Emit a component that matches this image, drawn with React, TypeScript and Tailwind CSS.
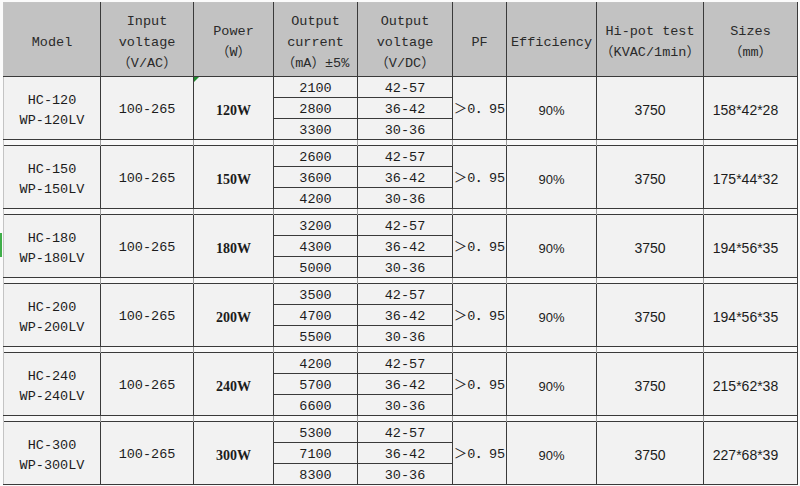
const groups = [
  { model: "HC-120", alt: "WP-120LV", power: "120W", currents: ["2100", "2800", "3300"], size: "158*42*28" },
  { model: "HC-150", alt: "WP-150LV", power: "150W", currents: ["2600", "3600", "4200"], size: "175*44*32" },
  { model: "HC-180", alt: "WP-180LV", power: "180W", currents: ["3200", "4300", "5000"], size: "194*56*35" },
  { model: "HC-200", alt: "WP-200LV", power: "200W", currents: ["3500", "4700", "5500"], size: "194*56*35" },
  { model: "HC-240", alt: "WP-240LV", power: "240W", currents: ["4200", "5700", "6600"], size: "215*62*38" },
  { model: "HC-300", alt: "WP-300LV", power: "300W", currents: ["5300", "7100", "8300"], size: "227*68*39" },
];

const volts = ["42-57", "36-42", "30-36"];

const mono = "font-['Liberation_Mono','Noto_Sans_CJK_SC',monospace]";
const sans = "font-['Liberation_Sans',Arial,sans-serif]";
const cell = "border border-[#3a3a3a] p-0 text-center align-middle";
// merged cells sit a little low in the sheet
const tall = `${cell} pt-[5px]`;

function Group({ g, first }: { g: (typeof groups)[number]; first: boolean }) {
  return (
    <>
      {g.currents.map((c, i) => (
        <tr key={c} className="h-[21px]">
          {i === 0 && (
            <>
              <td rowSpan={3} className={`${tall} ${mono} border-l-[#c4c4c4] text-[13.5px] leading-[20px]`}>
                {g.model}
                <br />
                {g.alt}
              </td>
              <td rowSpan={3} className={`${tall} ${mono} text-[13.5px]`}>
                100-265
              </td>
              <td rowSpan={3} className={`${tall} relative font-['Liberation_Serif',serif] text-[14px] font-bold`}>
                {first && (
                  <span className="absolute left-0 top-0 h-0 w-0 border-r-[5px] border-t-[5px] border-r-transparent border-t-[#1e8a2e]" />
                )}
                {g.power}
              </td>
            </>
          )}
          <td className={`${cell} ${mono} pt-[3px] text-[13.5px] leading-[17px]`}>{c}</td>
          <td className={`${cell} ${mono} pt-[3px] text-[13.5px] leading-[17px]`}>{volts[i]}</td>
          {i === 0 && (
            <>
              <td rowSpan={3} className={`${tall} ${mono} text-[13.5px]`}>
                ＞0．95
              </td>
              <td rowSpan={3} className={`${tall} ${sans} text-[13px]`}>
                90%
              </td>
              <td rowSpan={3} className={`${tall} ${sans} text-[14px]`}>
                3750
              </td>
              <td rowSpan={3} className={`${tall} ${sans} pr-[10px] text-[14px]`}>
                {g.size}
              </td>
            </>
          )}
        </tr>
      ))}
    </>
  );
}

function Spacer() {
  return (
    <tr className="h-[6px] bg-[#f9f9f9]">
      {Array.from({ length: 9 }, (_, i) => (
        <td
          key={i}
          className={`border-x p-0 ${i === 0 ? "border-l-[#c4c4c4] border-r-[#9a9a9a]" : i === 8 ? "border-l-[#9a9a9a] border-r-[#3a3a3a]" : "border-[#9a9a9a]"}`}
        />
      ))}
    </tr>
  );
}

export default function App() {
  const head = `${cell} ${mono} bg-[#c2c2c2] border-t-[#c4c4c4] pt-[5px] text-[13.5px] font-normal leading-[21px] text-[#2a2a2a]`;
  return (
    <div className="relative min-h-screen bg-[#fbfbfb] pl-[3px] pt-[2px]">
      <span className="absolute left-0 top-[233px] h-[24px] w-[2px] bg-[#3fae49]" />
      <table className="w-[794px] table-fixed border-collapse bg-[#f2f2f2] text-[#1c1c1c]">
        <colgroup>
          <col className="w-[97px]" />
          <col className="w-[93px]" />
          <col className="w-[80px]" />
          <col className="w-[84px]" />
          <col className="w-[95px]" />
          <col className="w-[54px]" />
          <col className="w-[90px]" />
          <col className="w-[107px]" />
          <col className="w-[94px]" />
        </colgroup>
        <thead>
          <tr className="h-[74px]">
            <th className={`${head} border-l-[#c4c4c4]`}>Model</th>
            <th className={head}>
              Input
              <br />
              voltage
              <br />
              （V/AC）
            </th>
            <th className={head}>
              Power
              <br />
              （W）
            </th>
            <th className={head}>
              Output
              <br />
              current
              <br />
              （mA）±5%
            </th>
            <th className={head}>
              Output
              <br />
              voltage
              <br />
              （V/DC）
            </th>
            <th className={head}>PF</th>
            <th className={head}>Efficiency</th>
            <th className={head}>
              Hi-pot test
              <br />
              （KVAC/1min）
            </th>
            <th className={head}>
              Sizes
              <br />
              （mm）
            </th>
          </tr>
        </thead>
        <tbody>
          {groups
            .map((g, i) => <Group key={g.model} g={g} first={i === 0} />)
            .flatMap((el, i) => (i === 0 ? [el] : [<Spacer key={`s${i}`} />, el]))}
        </tbody>
      </table>
    </div>
  );
}
